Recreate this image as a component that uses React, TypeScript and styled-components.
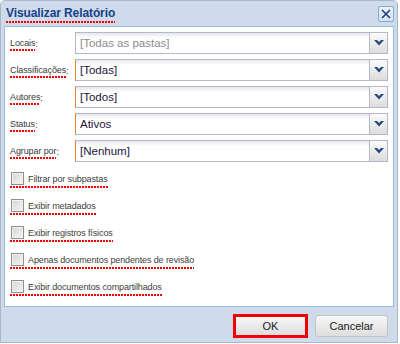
import * as React from 'react';
import styled, { createGlobalStyle, css } from 'styled-components';

const GlobalStyle = createGlobalStyle`
  html, body {
    margin: 0;
    padding: 0;
    background: #ffffff;
  }
  body {
    font-family: "Liberation Sans", Arial, sans-serif;
  }
`;

// red dotted spell-check line under a word
const squiggle = css`
  background-image: linear-gradient(90deg, #f00000 2px, transparent 2px);
  background-size: 3px 2px;
  background-repeat: repeat-x;
  background-position: left bottom;
`;

const Window = styled.div`
  box-sizing: border-box;
  width: 398px;
  height: 343px;
  background: #cfdbea;
  border: 1px solid #a9b6c6;
  border-radius: 5px 5px 0 0;
  display: flex;
  flex-direction: column;
`;

const Header = styled.div`
  height: 25px;
  display: flex;
  align-items: center;
  justify-content: space-between;
  padding: 0 3px 0 5px;
`;

const Title = styled.span`
  font-size: 12px;
  font-weight: bold;
  color: #15428b;
  line-height: 13px;
  letter-spacing: -0.1px;
  padding-bottom: 3px;
  margin-top: 3px;
  ${squiggle};
`;

const CloseTool = styled.div`
  box-sizing: border-box;
  width: 16px;
  height: 16px;
  border: 1px solid #87a7d6;
  border-radius: 2px;
  background: linear-gradient(#eef3fb, #d3e1f4);
  display: flex;
  align-items: center;
  justify-content: center;
`;

const Panel = styled.div`
  box-sizing: border-box;
  margin: 0 3px;
  height: 281px;
  background: #ffffff;
  border: 1px solid #99bbe8;
  padding: 5px 5px 0 5px;
`;

const Fields = styled.div`
  display: grid;
  grid-template-columns: 65px 1fr;
  grid-auto-rows: 22px;
  row-gap: 5px;
`;

const Label = styled.div`
  display: flex;
  align-items: center;
  font-size: 9px;
  letter-spacing: -0.1px;
  color: #3a3a3a;
  padding-top: 2px;
`;

const Word = styled.span`
  display: inline-block;
  line-height: 10px;
  padding-bottom: 3px;
  ${squiggle};
`;

const Combo = styled.div<{ $dirty?: boolean }>`
  box-sizing: border-box;
  height: 22px;
  display: flex;
  border: 1px solid #b5b8c8;
  border-left-color: ${p => (p.$dirty ? '#e8802c' : '#b5b8c8')};
  background: linear-gradient(#e6e7ec 0, #ffffff 5px);
`;

const ComboText = styled.div<{ $disabled?: boolean }>`
  flex: 1;
  display: flex;
  align-items: center;
  padding-left: 4px;
  font-size: 11.5px;
  color: ${p => (p.$disabled ? '#8c8c8c' : '#1a1540')};
`;

const Trigger = styled.div`
  width: 17px;
  border-left: 1px solid #b5b8c8;
  background: linear-gradient(#fbfbfb, #dcdcdc);
  display: flex;
  align-items: center;
  justify-content: center;
`;

const Checks = styled.div`
  margin-top: 10px;
  display: flex;
  flex-direction: column;
`;

const CheckRow = styled.div`
  height: 27px;
  display: flex;
  align-items: flex-start;
`;

const CheckItem = styled.label`
  display: flex;
  align-items: center;
  gap: 4px;
  padding-left: 1px;
  padding-bottom: 3px;
  font-size: 9px;
  letter-spacing: -0.12px;
  color: #3d3d3d;
  ${squiggle};
`;

const Box = styled.span`
  box-sizing: border-box;
  width: 13px;
  height: 13px;
  border: 1px solid #8f8f8f;
  background: linear-gradient(135deg, #d4d4d4, #f6f6f6);
  box-shadow: inset 0 0 0 1px #f2f2f2;
`;

const Footer = styled.div`
  flex: 1;
  display: flex;
  justify-content: flex-end;
  align-items: flex-start;
  gap: 8px;
  padding: 8px 9px 0 0;
`;

const Button = styled.button<{ $marked?: boolean }>`
  box-sizing: border-box;
  width: 73px;
  height: 22px;
  font-family: "Liberation Sans", Arial, sans-serif;
  font-size: 11px;
  color: #222;
  border: 1px solid #c4c4c4;
  border-radius: 3px;
  background: linear-gradient(#f7f7f7, #dedede);
  padding: 0;
  ${p =>
    p.$marked &&
    css`
      border-radius: 0;
      border: 2px solid #f00000;
      outline: 1px solid #f00000;
    `}
`;

const Chevron = () => (
  <svg width="10" height="6" viewBox="0 0 10 6">
    <polygon points="0,0 3,0 5,2 7,0 10,0 5,5.5" fill="#26497f" />
  </svg>
);

const CloseIcon = () => (
  <svg width="12" height="12" viewBox="0 0 12 12">
    <path d="M2 2 L10 10 M10 2 L2 10" stroke="#1e3f78" strokeWidth="1.6" />
  </svg>
);

const fields = [
  { word: 'Locais', value: '[Todas as pastas]', disabled: true },
  { word: 'Classificações', value: '[Todas]' },
  { word: 'Autores', value: '[Todos]' },
  { word: 'Status', value: 'Ativos' },
  { word: 'Agrupar por', value: '[Nenhum]' },
];

const options = [
  'Filtrar por subpastas',
  'Exibir metadados',
  'Exibir registros físicos',
  'Apenas documentos pendentes de revisão',
  'Exibir documentos compartilhados',
];

export default function App(): JSX.Element {
  return (
    <>
      <GlobalStyle />
      <Window>
        <Header>
          <Title>Visualizar Relatório</Title>
          <CloseTool>
            <CloseIcon />
          </CloseTool>
        </Header>
        <Panel>
          <Fields>
            {fields.map(f => (
              <React.Fragment key={f.word}>
                <Label>
                  <Word>{f.word}</Word>:
                </Label>
                <Combo $dirty={!f.disabled}>
                  <ComboText $disabled={f.disabled}>{f.value}</ComboText>
                  <Trigger>
                    <Chevron />
                  </Trigger>
                </Combo>
              </React.Fragment>
            ))}
          </Fields>
          <Checks>
            {options.map(o => (
              <CheckRow key={o}>
                <CheckItem>
                  <Box />
                  {o}
                </CheckItem>
              </CheckRow>
            ))}
          </Checks>
        </Panel>
        <Footer>
          <Button $marked>OK</Button>
          <Button>Cancelar</Button>
        </Footer>
      </Window>
    </>
  );
}
